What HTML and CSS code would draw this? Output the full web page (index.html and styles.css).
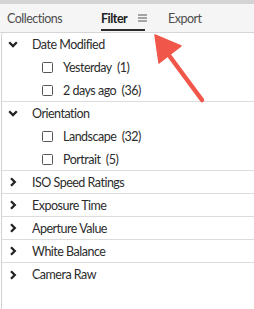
FILE: index.html
```html
<!DOCTYPE html>
<html>
<head>
<meta charset="utf-8">
<link rel="stylesheet" href="styles.css">
</head>
<body>
<div class="topband"></div>
<div class="tabbar">
  <span class="tab tab-collections">Collections</span>
  <span class="tab tab-filter active">Filter
    <svg class="menu-icon" width="9" height="8" viewBox="0 0 9 8"><path d="M0 1h9M0 4h9M0 7h9" stroke="#555" stroke-width="1.2"/></svg>
  </span>
  <span class="tab tab-export">Export</span>
</div>
<div class="panel">
  <div class="group">
    <div class="row header"><svg class="chev" width="10" height="7" viewBox="0 0 10 7"><path d="M1.2 1.2l3.8 3.8l3.8-3.8" fill="none" stroke="#222" stroke-width="2.3"/></svg><span>Date Modified</span></div>
    <div class="row item"><span class="box"></span><span>Yesterday&nbsp; (1)</span></div>
    <div class="row item"><span class="box"></span><span>2 days ago&nbsp; (36)</span></div>
  </div>
  <div class="group">
    <div class="row header"><svg class="chev" width="10" height="7" viewBox="0 0 10 7"><path d="M1.2 1.2l3.8 3.8l3.8-3.8" fill="none" stroke="#222" stroke-width="2.3"/></svg><span>Orientation</span></div>
    <div class="row item"><span class="box"></span><span>Landscape&nbsp; (32)</span></div>
    <div class="row item"><span class="box"></span><span>Portrait&nbsp; (5)</span></div>
  </div>
  <div class="group">
    <div class="row header"><svg class="chev" width="10" height="10" viewBox="0 0 10 10"><path d="M3 1.2l3.8 3.8L3 8.8" fill="none" stroke="#222" stroke-width="2.3"/></svg><span>ISO Speed Ratings</span></div>
  </div>
  <div class="group">
    <div class="row header"><svg class="chev" width="10" height="10" viewBox="0 0 10 10"><path d="M3 1.2l3.8 3.8L3 8.8" fill="none" stroke="#222" stroke-width="2.3"/></svg><span>Exposure Time</span></div>
  </div>
  <div class="group">
    <div class="row header"><svg class="chev" width="10" height="10" viewBox="0 0 10 10"><path d="M3 1.2l3.8 3.8L3 8.8" fill="none" stroke="#222" stroke-width="2.3"/></svg><span>Aperture Value</span></div>
  </div>
  <div class="group">
    <div class="row header"><svg class="chev" width="10" height="10" viewBox="0 0 10 10"><path d="M3 1.2l3.8 3.8L3 8.8" fill="none" stroke="#222" stroke-width="2.3"/></svg><span>White Balance</span></div>
  </div>
  <div class="group last">
    <div class="row header"><svg class="chev" width="10" height="10" viewBox="0 0 10 10"><path d="M3 1.2l3.8 3.8L3 8.8" fill="none" stroke="#222" stroke-width="2.3"/></svg><span>Camera Raw</span></div>
  </div>
</div>
<svg class="arrow" width="254" height="309" viewBox="0 0 254 309">
  <path d="M202 100L168 54" stroke="#f0574a" stroke-width="4.5" stroke-linecap="round"/>
  <path d="M155 35L181 46L159 63Z" fill="#f0574a" stroke="#f0574a" stroke-width="1.5" stroke-linejoin="round"/>
</svg>
</body>
</html>
```

FILE: styles.css
```css
* { box-sizing: border-box; }
html, body { margin: 0; padding: 0; background: #fff; }
body {
  width: 254px;
  height: 309px;
  overflow: hidden;
  position: relative;
  font-family: Lato, "Open Sans", sans-serif;
  font-size: 12.5px;
  letter-spacing: -0.5px;
  color: #2c2c2c;
}
.topband {
  height: 5px;
  background: #d4d4d4;
  border-bottom: 1px solid #7aa6e4;
}
.tabbar {
  height: 29px;
  margin-top: -1px;
  background: #f5f5f5;
  border-bottom: 1px solid #d6d6d6;
  display: flex;
  align-items: center;
  padding-left: 7px;
  position: relative;
}
.tab { color: #4e4e4e; white-space: nowrap; display: flex; align-items: center; }
.tab-collections { width: 94px; }
.tab-filter {
  font-weight: bold;
  color: #222;
  width: 67px;
  position: relative;
}
.tab-filter::after {
  content: "";
  position: absolute;
  left: 0;
  width: 44px;
  top: 18px;
  height: 2px;
  background: #2c2c2c;
}
.menu-icon { margin-left: 11px; }
.panel {
  margin-left: 1px;
  border-left: 1px solid #d2d2d2;
  height: 280px;
  border-top-left-radius: 3px;
}
.group { border-bottom: 1px solid #dcdcdc; }
.group.last { border-bottom: none; }
.row {
  height: 23px;
  display: flex;
  align-items: center;
  white-space: nowrap;
}
.group:not(.last) > .row:last-child { height: 22px; }
.header .chev { margin-left: 6px; margin-right: 14px; }
.item { padding-left: 40px; }
.box {
  width: 11px;
  height: 11px;
  border: 1.5px solid #555;
  border-radius: 1.5px;
  margin-right: 10px;
  background: #fff;
}
.arrow { position: absolute; left: 0; top: 0; pointer-events: none; }
```
